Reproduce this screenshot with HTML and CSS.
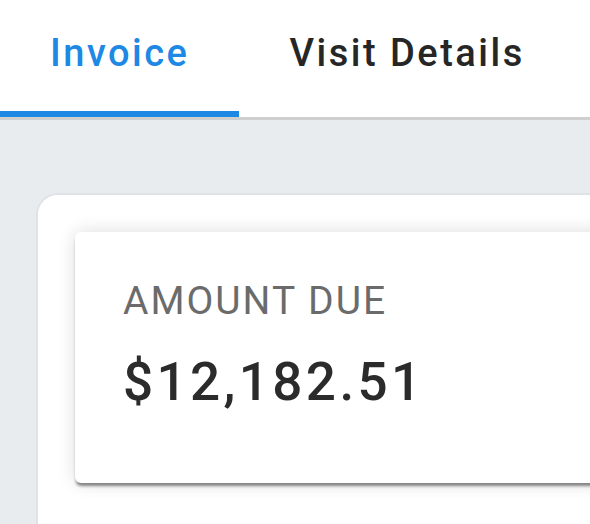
FILE: index.html
```html
<!DOCTYPE html>
<html lang="en">
<head>
    <meta charset="UTF-8">
    <meta name="viewport" content="width=device-width, initial-scale=1.0">
    <title>Invoice</title>
    <link rel="stylesheet" href="styles.css">
</head>
<body>
    <div class="tabs">
        <div class="tab active">Invoice</div>
        <div class="tab">Visit Details</div>
    </div>
    <div class="content">
        <div class="panel">
            <div class="summary">
                <div class="label">AMOUNT DUE</div>
                <div class="amount">$12,182.51</div>
            </div>
        </div>
    </div>
</body>
</html>
```

FILE: styles.css
```css
body {
    margin: 0;
    height: 100vh;
    overflow: hidden;
    background-color: #e8ecef;
    font-family: Roboto, "Liberation Sans", sans-serif;
}
.tabs {
    display: flex;
    background-color: #fff;
    border-bottom: 3px solid #cfcfcf;
}
.tab {
    padding: 34px 50px 39px;
    font-size: 38px;
    line-height: 38px;
    font-weight: 500;
    letter-spacing: 2.5px;
    color: #262626;
    border-bottom: 6px solid transparent;
}
.tab.active {
    color: #1e88e5;
    border-bottom-color: #1e88e5;
}
.content {
    padding: 73px 0 0 36px;
}
.panel {
    width: 700px;
    height: 500px;
    padding: 37px;
    background-color: #fff;
    border: 2px solid #dfe3e7;
    border-radius: 22px;
}
.summary {
    padding: 50px 48px 75px;
    background-color: #fff;
    border-radius: 6px;
    box-shadow: 0 4px 3px -1px rgba(0, 0, 0, 0.45), 0 0 18px rgba(0, 0, 0, 0.14);
}
.label {
    font-size: 39px;
    line-height: 39px;
    color: #6b6b6b;
    letter-spacing: 2px;
}
.amount {
    margin-top: 35px;
    font-size: 53px;
    line-height: 52px;
    font-weight: 500;
    color: #2b2b2b;
    letter-spacing: 3.4px;
}
```
